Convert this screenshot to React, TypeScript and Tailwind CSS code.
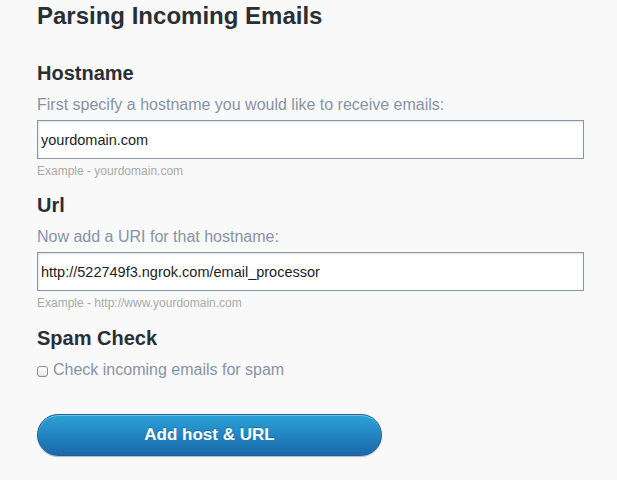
import { useState } from "react";

function Field({
  label,
  hint,
  value,
  example,
}: {
  label: string;
  hint: string;
  value: string;
  example: string;
}) {
  const [val, setVal] = useState(value);
  return (
    <div className="flex flex-col">
      <h2 className="text-[20px] leading-[20px] font-bold text-[#2a2e35]">{label}</h2>
      <p className="mt-[14px] text-[16px] leading-[16px] text-[#8793a6]">{hint}</p>
      <input
        className="mt-[7px] h-[39px] w-[547px] border border-[#8596ac] bg-white px-[3px] text-[14.5px] text-[#1d1d1d] shadow-[inset_1px_1px_2px_rgba(0,0,0,0.12)] outline-none"
        value={val}
        onChange={(e) => setVal(e.target.value)}
      />
      <span className="mt-[6px] text-[12px] leading-[12px] text-[#a9a9a9]">{example}</span>
    </div>
  );
}

export default function App() {
  const [spam, setSpam] = useState(false);

  return (
    <div className="min-h-[480px] w-full bg-[#f9f9f9] pl-[37px] pt-[4px] font-['Liberation_Sans',Arial,sans-serif]">
      <h1 className="text-[24px] leading-[24px] font-bold text-[#2a2e35]">Parsing Incoming Emails</h1>

      <div className="mt-[35px] flex flex-col gap-[18px]">
        <Field
          label="Hostname"
          hint="First specify a hostname you would like to receive emails:"
          value="yourdomain.com"
          example="Example - yourdomain.com"
        />
        <Field
          label="Url"
          hint="Now add a URI for that hostname:"
          value="http://522749f3.ngrok.com/email_processor"
          example="Example - http://www.yourdomain.com"
        />
        <div className="mt-[1px] flex flex-col">
          <h2 className="text-[20px] leading-[20px] font-bold text-[#2a2e35]">Spam Check</h2>
          <label className="mt-[14px] flex items-center text-[16px] leading-[16px] text-[#8793a6]">
            <span
              onClick={() => setSpam(!spam)}
              className="mt-[2px] mr-[5px] flex h-[11px] w-[11px] items-center justify-center rounded-[3px] border border-[#8e8e8e] bg-gradient-to-b from-white to-[#e6e6e6] text-[9px] leading-none text-[#333]"
            >
              {spam ? "✓" : ""}
            </span>
            Check incoming emails for spam
          </label>
        </div>
      </div>

      <button className="mt-[36px] flex h-[42px] w-[345px] items-center justify-center rounded-full border border-[#1d609c] bg-gradient-to-b from-[#2ca2d8] to-[#1b68a9] text-[17px] font-bold text-white shadow-[inset_0_1px_0_rgba(255,255,255,0.35),0_1px_1px_rgba(0,0,0,0.25)] [text-shadow:0_-1px_0_rgba(0,0,0,0.25)]">
        Add host &amp; URL
      </button>
    </div>
  );
}
